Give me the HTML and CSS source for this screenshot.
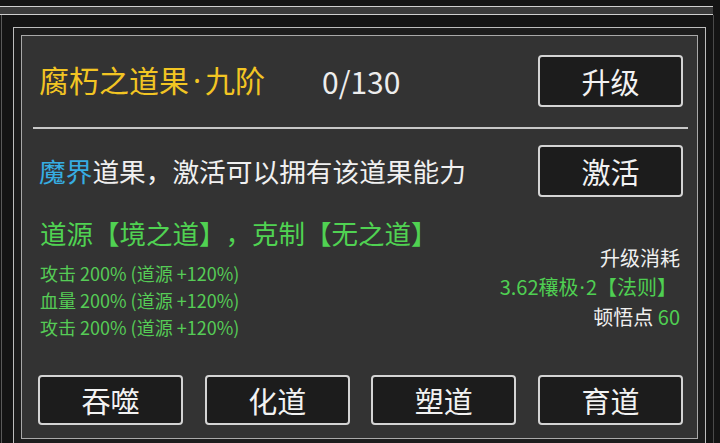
FILE: index.html
```html
<!DOCTYPE html>
<html lang="zh-CN">
<head>
<meta charset="utf-8">
<title>道果</title>
<link rel="stylesheet" href="styles.css">
</head>
<body>
<div class="window">
  <div class="topbar"></div>
  <div class="stage">
    <div class="frame">
      <div class="panel">
        <div class="row head-row">
          <span class="title">腐朽之道果<span class="dot dot-wide">·</span>九阶</span>
          <span class="count">0/130</span>
          <button class="btn btn-tall">升级</button>
        </div>
        <div class="divider"></div>
        <div class="row desc-row">
          <span class="desc"><span class="blue">魔界</span>道果，激活可以拥有该道果能力</span>
          <button class="btn btn-tall">激活</button>
        </div>
        <div class="info">
          <div class="info-left">
            <div class="source">道源【境之道】，克制【无之道】</div>
            <ul class="stats">
              <li>攻击 200% (道源 +120%)</li>
              <li>血量 200% (道源 +120%)</li>
              <li>攻击 200% (道源 +120%)</li>
            </ul>
          </div>
          <div class="info-right">
            <div>升级消耗</div>
            <div class="green cost">3.62穰极<span class="dot dot-cost">·</span>2【法则】</div>
            <div>顿悟点 <span class="green">60</span></div>
          </div>
        </div>
        <div class="actions">
          <button class="btn">吞噬</button>
          <button class="btn">化道</button>
          <button class="btn">塑道</button>
          <button class="btn">育道</button>
        </div>
      </div>
    </div>
  </div>
</div>
</body>
</html>
```

FILE: styles.css
```css
html, body {
  margin: 0;
  padding: 0;
}
body {
  width: 720px;
  height: 443px;
  overflow: hidden;
  background: #141414;
  font-family: "Noto Sans CJK SC", "Noto Sans", sans-serif;
  color: #f0f0f0;
  text-spacing-trim: space-all;
}
.topbar {
  margin-top: 6px;
  width: 713px;
  height: 7px;
  border-top: 1px solid #cfcfcf;
  border-bottom: 1px solid #cfcfcf;
  background: #3b3b3b;
}
.stage {
  margin-left: 1px;
  width: 713px;
  height: 428px;
  box-sizing: border-box;
  border-left: 1px solid #5a5a5a;
  border-right: 1px solid #4a4a4a;
  padding: 12px 7px 0 11px;
  overflow: hidden;
}
.frame {
  border: 1px solid #bdbdbd;
  background: #1d1d1d;
  padding: 7px;
}
.panel {
  box-sizing: border-box;
  height: 404px;
  border: 1px solid #a9a9a9;
  background: #333333;
  padding: 0 14px 13px 16px;
  display: flex;
  flex-direction: column;
}
.row {
  display: flex;
  align-items: center;
}
.head-row {
  margin-top: 19px;
}
.title {
  margin-left: 1px;
  margin-top: -2px;
  font-size: 30px;
  line-height: 1;
  color: #f2c523;
}
.dot {
  font-family: "Noto Sans", "DejaVu Sans", sans-serif;
}
.dot-wide {
  margin: 0 4px;
}
.dot-cost {
  margin: 0 1px;
}
.count {
  margin-left: 57px;
  margin-top: -1px;
  font-size: 30px;
  line-height: 1;
  color: #ededed;
}
.btn {
  box-sizing: border-box;
  width: 145px;
  height: 50px;
  padding: 0;
  border: 2px solid #d4d4d4;
  border-radius: 4px;
  background: #1c1c1c;
  color: #f2f2f2;
  font-family: inherit;
  font-size: 29px;
  line-height: 1;
}
.btn-tall {
  height: 52px;
  margin-left: auto;
}
.divider {
  margin: 20px -5px 0 -5px;
  height: 2px;
  background: #c8c8c8;
}
.desc-row {
  margin-top: 16px;
}
.desc {
  margin-left: 1px;
  font-size: 26.7px;
  line-height: 1;
  color: #f0f0f0;
}
.blue {
  color: #36ade2;
}
.green {
  color: #4fcf52;
}
.info {
  margin-top: 19px;
  display: flex;
  justify-content: space-between;
  align-items: flex-start;
}
.info-left {
  margin-left: 2px;
}
.source {
  font-size: 26.5px;
  line-height: 34px;
  color: #50d252;
}
.stats {
  list-style: none;
  margin: 10px 0 0 0;
  padding: 0;
  font-size: 18px;
  line-height: 27px;
  color: #56cc56;
}
.info-right {
  margin-top: 27px;
  padding-right: 3px;
  text-align: right;
  font-size: 20px;
  line-height: 29px;
  color: #f0f0f0;
}
.cost {
  padding-right: 3px;
}
.actions {
  margin-top: auto;
  display: flex;
  justify-content: space-between;
}
```
